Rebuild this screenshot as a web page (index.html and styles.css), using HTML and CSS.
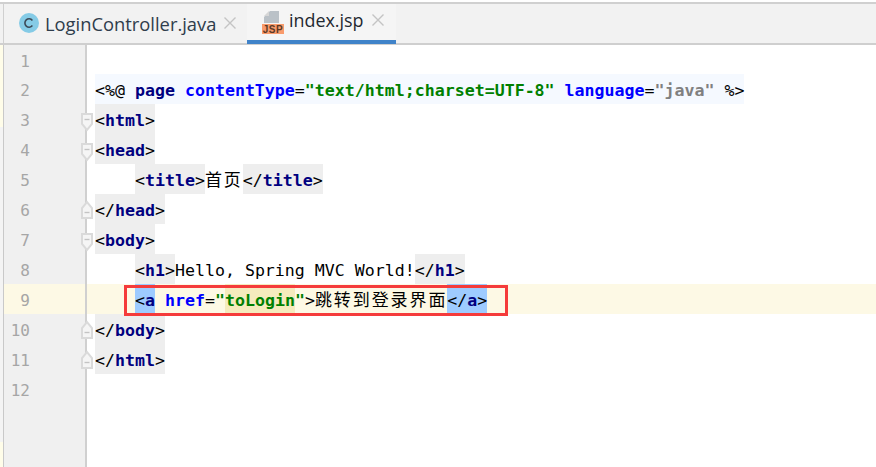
FILE: index.html
```html
<!DOCTYPE html>
<html lang="zh">
<head>
<meta charset="utf-8">
<title>index.jsp</title>
<link rel="stylesheet" href="styles.css">
</head>
<body>
<div class="window">
  <div class="tabs">
    <div class="tab tab-first">
      <svg class="icon-c" width="20" height="20" viewBox="0 0 20 20"><circle cx="10" cy="10" r="10" fill="#85cbe6"/><path d="M13.4 7.4A4.2 4.2 0 1 0 13.4 12.6" fill="none" stroke="#3c4a58" stroke-width="1.6"/></svg>
      <span class="tab-name">LoginController.java</span>
      <svg class="tab-close" width="12" height="12" viewBox="0 0 12 12"><path d="M0.5 0.5L11.5 11.5M11.5 0.5L0.5 11.5" stroke="#c4c4c4" stroke-width="1.4"/></svg>
    </div>
    <div class="tab tab-active">
      <svg class="icon-jsp" width="24" height="24" viewBox="0 0 24 24"><path d="M8 1H17V13H2V7Z" fill="#bac1c7"/><path d="M2 6L7 1V6Z" fill="#d6d6d6"/><rect x="0" y="14" width="22" height="10" fill="#f99b6c"/><text x="11" y="22.8" class="jsp-label" text-anchor="middle">JSP</text></svg>
      <span class="tab-name">index.jsp</span>
      <svg class="tab-close" width="12" height="12" viewBox="0 0 12 12"><path d="M0.5 0.5L11.5 11.5M11.5 0.5L0.5 11.5" stroke="#c4c4c4" stroke-width="1.4"/></svg>
    </div>
  </div>
  <div class="editor">
    <div class="row row-first"><div class="gutter">1</div><div class="code"></div></div>
    <div class="row"><div class="gutter">2</div><div class="code"><span class="directive">&lt;%@ <b class="tag">page</b> <b class="attr">contentType</b>=<b class="str">"text/html;charset=UTF-8"</b> <b class="attr">language</b>=<b class="str-gray">"java"</b> %&gt;</span></div></div>
    <div class="row"><div class="gutter">3<svg class="fold" width="14" height="20" viewBox="0 0 14 20"><path d="M2 1H12V11L7 17L2 11Z" fill="#f5f5f5" stroke="#dadada" stroke-width="2"/><path d="M4.5 6.5H9.5" stroke="#c4c4c4" stroke-width="1.4"/></svg></div><div class="code"><span class="el">&lt;<b class="tag">html</b>&gt;</span></div></div>
    <div class="row"><div class="gutter">4<svg class="fold" width="14" height="20" viewBox="0 0 14 20"><path d="M2 1H12V11L7 17L2 11Z" fill="#f5f5f5" stroke="#dadada" stroke-width="2"/><path d="M4.5 6.5H9.5" stroke="#c4c4c4" stroke-width="1.4"/></svg></div><div class="code"><span class="el">&lt;<b class="tag">head</b>&gt;</span></div></div>
    <div class="row"><div class="gutter">5</div><div class="code">    <span class="el">&lt;<b class="tag">title</b>&gt;</span><span class="cjk">首页</span><span class="el">&lt;/<b class="tag">title</b>&gt;</span></div></div>
    <div class="row"><div class="gutter">6<svg class="fold fold-end" width="14" height="20" viewBox="0 0 14 20"><path d="M2 19H12V9L7 3L2 9Z" fill="#f5f5f5" stroke="#dadada" stroke-width="2"/><path d="M4.5 13.5H9.5" stroke="#c4c4c4" stroke-width="1.4"/></svg></div><div class="code"><span class="el">&lt;/<b class="tag">head</b>&gt;</span></div></div>
    <div class="row"><div class="gutter">7<svg class="fold" width="14" height="20" viewBox="0 0 14 20"><path d="M2 1H12V11L7 17L2 11Z" fill="#f5f5f5" stroke="#dadada" stroke-width="2"/><path d="M4.5 6.5H9.5" stroke="#c4c4c4" stroke-width="1.4"/></svg></div><div class="code"><span class="el">&lt;<b class="tag">body</b>&gt;</span></div></div>
    <div class="row"><div class="gutter">8</div><div class="code">    <span class="el">&lt;<b class="tag">h1</b>&gt;</span>Hello, Spring MVC World!<span class="el">&lt;/<b class="tag">h1</b>&gt;</span></div></div>
    <div class="row row-current"><div class="gutter">9</div><div class="code">    <span class="match">&lt;<b class="tag">a</b></span> <b class="attr">href</b>=<b class="str">"<span class="ref">toLogin</span>"</b>&gt;<span class="cjk">跳转到登录界面</span><span class="match">&lt;/<b class="tag">a</b>&gt;</span><span class="callout"></span></div></div>
    <div class="row"><div class="gutter">10<svg class="fold fold-end" width="14" height="20" viewBox="0 0 14 20"><path d="M2 19H12V9L7 3L2 9Z" fill="#f5f5f5" stroke="#dadada" stroke-width="2"/><path d="M4.5 13.5H9.5" stroke="#c4c4c4" stroke-width="1.4"/></svg></div><div class="code"><span class="el">&lt;/<b class="tag">body</b>&gt;</span></div></div>
    <div class="row"><div class="gutter">11<svg class="fold fold-end" width="14" height="20" viewBox="0 0 14 20"><path d="M2 19H12V9L7 3L2 9Z" fill="#f5f5f5" stroke="#dadada" stroke-width="2"/><path d="M4.5 13.5H9.5" stroke="#c4c4c4" stroke-width="1.4"/></svg></div><div class="code"><span class="el">&lt;/<b class="tag">html</b>&gt;</span></div></div>
    <div class="row"><div class="gutter">12</div><div class="code"></div></div>
    <div class="row row-fill"><div class="gutter"></div><div class="code"></div></div>
  </div>
</div>
</body>
</html>
```
FILE: styles.css
```css
* { box-sizing: border-box; }
html, body { margin: 0; padding: 0; }
body { width: 876px; height: 467px; overflow: hidden; background: #fff; }
.window {
  display: flex;
  flex-direction: column;
  height: 467px;
  padding-top: 2px;
  background: linear-gradient(#fff 44px, #fffde9 44px, #fffde9 127px, #f4f4f4 127px, #f4f4f4 442px, #fffde9 442px);
}
.tabs {
  display: flex;
  height: 43px;
  flex: none;
  padding-left: 4px;
  background: #f2f2f2;
  border-top: 2px solid #d0d0d0;
  border-bottom: 2px solid #cfcfcf;
  font-family: "Open Sans", "Noto Sans", sans-serif;
  font-size: 18.35px;
  color: #2f3d4c;
  position: relative;
}
.tabs::before {
  content: "";
  position: absolute;
  left: 3px;
  top: 0;
  bottom: 0;
  width: 1px;
  background: #d0d0d0;
}
.tab { display: flex; align-items: center; height: 38px; }
.tab-first { width: 243px; padding-left: 15px; }
.tab-active {
  width: 149px;
  height: 40px;
  padding-left: 15px;
  padding-bottom: 4px;
  background: #f5f5f5;
  border-bottom: 4px solid #4083c9;
  color: #1f2830;
  font-size: 17.9px;
}
.icon-c { margin-right: 6px; flex: none; }
.icon-jsp { margin-right: 3px; margin-top: 4px; flex: none; }
.jsp-label { font: bold 10px "Liberation Sans", sans-serif; letter-spacing: 0.5px; fill: #5c3a26; }
.tab-name { white-space: nowrap; }
.tab .tab-close { margin-left: 8px; flex: none; }
.editor {
  flex: 1;
  display: flex;
  flex-direction: column;
  min-height: 0;
  font-family: "DejaVu Sans Mono", monospace;
  font-size: 16.6px;
  color: #000;
  border-left: 1px solid #c9c9c9;
  margin-left: 3px;
}
.row { display: flex; height: 30px; flex: none; }
.row-first { height: 29px; }
.row-fill { flex: 1; height: auto; }
.gutter {
  width: 83px;
  flex: none;
  position: relative;
  padding-right: 55px;
  text-align: right;
  line-height: 34px;
  font-size: 16px;
  color: #a6a6a6;
  background: #f0f0f0;
  border-right: 2px solid #d0d0d0;
}
.code {
  flex: 1;
  display: block;
  position: relative;
  padding-left: 8px;
  line-height: 34px;
  height: 100%;
  white-space: pre;
  background: #fff;
}
.fold { position: absolute; right: -9px; top: 9px; z-index: 1; }
.fold-end { top: 5px; }
.row-current .gutter, .row-current .code { background: #fdf9e5; }
.el, .directive, .match, .ref { display: inline-block; height: 30px; }
.el { background: #eeeeee; }
.directive { background: #f5f9ff; }
.tag { color: #000080; font-weight: bold; }
.attr { color: #0000ff; font-weight: bold; }
.str { color: #008000; font-weight: bold; }
.str-gray { color: #808080; font-weight: bold; }
.match { background: #9ecbff; }
.ref { background: #f5ebbd; }
.cjk {
  font-family: "Noto Sans CJK SC", sans-serif;
  font-size: 17px;
  font-weight: 400;
  line-height: 0;
  letter-spacing: 1.92px;
}
.callout {
  position: absolute;
  left: 37px;
  top: 1px;
  width: 384px;
  height: 31px;
  border: 3px solid #f53b3b;
  z-index: 2;
}
```
